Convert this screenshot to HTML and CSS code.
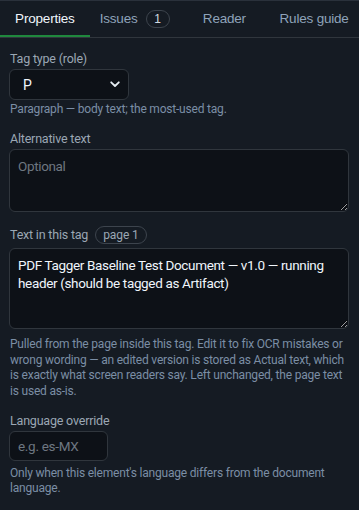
FILE: index.html
```html
<!DOCTYPE html>
<html lang="en">
<head>
<meta charset="utf-8">
<link rel="stylesheet" href="styles.css">
</head>
<body>
<nav class="tabs">
  <div class="tab active">Properties</div>
  <div class="tab">Issues <span class="count">1</span></div>
  <div class="tab">Reader</div>
  <div class="tab">Rules guide</div>
</nav>
<main class="panel">
  <section class="field">
    <label class="label">Tag type (role)</label>
    <div class="select">
      <span class="select-value">P</span>
      <svg class="chev" width="10" height="7" viewBox="0 0 10 7"><path d="M1.2 1.3 L5 5 L8.8 1.3" fill="none" stroke="#e6edf3" stroke-width="1.8" stroke-linecap="round" stroke-linejoin="round"/></svg>
    </div>
    <p class="help">Paragraph — body text; the most-used tag.</p>
  </section>
  <section class="field">
    <label class="label">Alternative text</label>
    <textarea class="area alt" placeholder="Optional"></textarea>
  </section>
  <section class="field">
    <div class="label-row"><label class="label">Text in this tag</label><span class="pill">page 1</span></div>
    <textarea class="area text">PDF Tagger Baseline Test Document — v1.0 — running header (should be tagged as Artifact)</textarea>
    <p class="help help-wide">Pulled from the page inside this tag. Edit it to fix OCR mistakes or wrong wording — an edited version is stored as Actual text, which is exactly what screen readers say. Left unchanged, the page text is used as-is.</p>
  </section>
  <section class="field">
    <label class="label">Language override</label>
    <input class="input" placeholder="e.g. es-MX">
    <p class="help help-last">Only when this element's language differs from the document language.</p>
  </section>
</main>
</body>
</html>
```
FILE: styles.css
```css
* { box-sizing: border-box; }
html, body { margin: 0; padding: 0; }
body {
  background: #151b23;
  color: #e6edf3;
  font-family: Roboto, "Noto Sans", sans-serif;
  width: 359px;
  height: 510px;
  overflow: hidden;
}
.tabs {
  display: flex;
  height: 38px;
  border-top: 1px solid #2a313b;
  border-bottom: 1px solid #30363d;
  font-family: "Liberation Sans", Arial, sans-serif;
  font-size: 13.5px;
}
.tab {
  flex: 1;
  display: flex;
  align-items: center;
  justify-content: center;
  gap: 8px;
  color: #8fa3ba;
  border-bottom: 2px solid transparent;
  padding-top: 1px;
  letter-spacing: -0.2px;
}
.tab.active {
  color: #f0f6fc;
  border-bottom-color: #1f883d;
}
.count {
  display: inline-flex;
  align-items: center;
  justify-content: center;
  width: 24px;
  height: 18px;
  border: 1px solid #3d444d;
  border-radius: 9px;
  font-size: 12px;
  color: #d1d9e0;
  background: #151b23;
  letter-spacing: 0;
}
.panel {
  padding: 13px 10px 0 9px;
  display: flex;
  flex-direction: column;
  gap: 14px;
}
.field { display: flex; flex-direction: column; }
.label {
  font-size: 12.5px;
  letter-spacing: -0.2px;
  line-height: 16px;
  color: #9ba7b4;
  margin: 0 0 2px 1px;
}
.label-row { display: flex; align-items: center; gap: 7px; margin-bottom: 4px; }
.label-row .label { margin-bottom: 0; }
.pill {
  height: 18px;
  border: 1px solid #3d444d;
  border-radius: 9px;
  font-size: 12px;
  letter-spacing: -0.1px;
  line-height: 16px;
  padding: 0 7px;
  color: #9ba7b4;
}
.select {
  width: 120px;
  height: 31px;
  background: #0d1117;
  border: 1px solid #30363d;
  border-radius: 6px;
  display: flex;
  align-items: center;
  justify-content: space-between;
  padding: 0 8px 0 13px;
  font-size: 14px;
  color: #f0f6fc;
}
.area {
  display: block;
  width: 100%;
  background: #0d1117;
  border: 1px solid #30363d;
  border-radius: 6px;
  color: #f0f6fc;
  font-family: Roboto, "Noto Sans", sans-serif;
  font-size: 13.5px;
  letter-spacing: -0.35px;
  line-height: 18px;
  padding: 7px 8px;
  resize: vertical;
  margin: 0;
}
.area::placeholder, .input::placeholder { color: #6e7781; }
.area.alt { height: 63px; }
.area.text { height: 81px; }
.input {
  width: 99px;
  height: 30px;
  background: #0d1117;
  border: 1px solid #30363d;
  border-radius: 6px;
  font-family: Roboto, "Noto Sans", sans-serif;
  font-size: 13.5px;
  letter-spacing: -0.3px;
  padding: 0 8px;
  color: #f0f6fc;
}
.help {
  margin: 2px 0 0 1px;
  font-size: 12px;
  letter-spacing: -0.2px;
  line-height: 15.4px;
  color: #7b8ea5;
}
.help-wide { margin-top: 8px; }
.help-last { margin-top: 5px; }
```
